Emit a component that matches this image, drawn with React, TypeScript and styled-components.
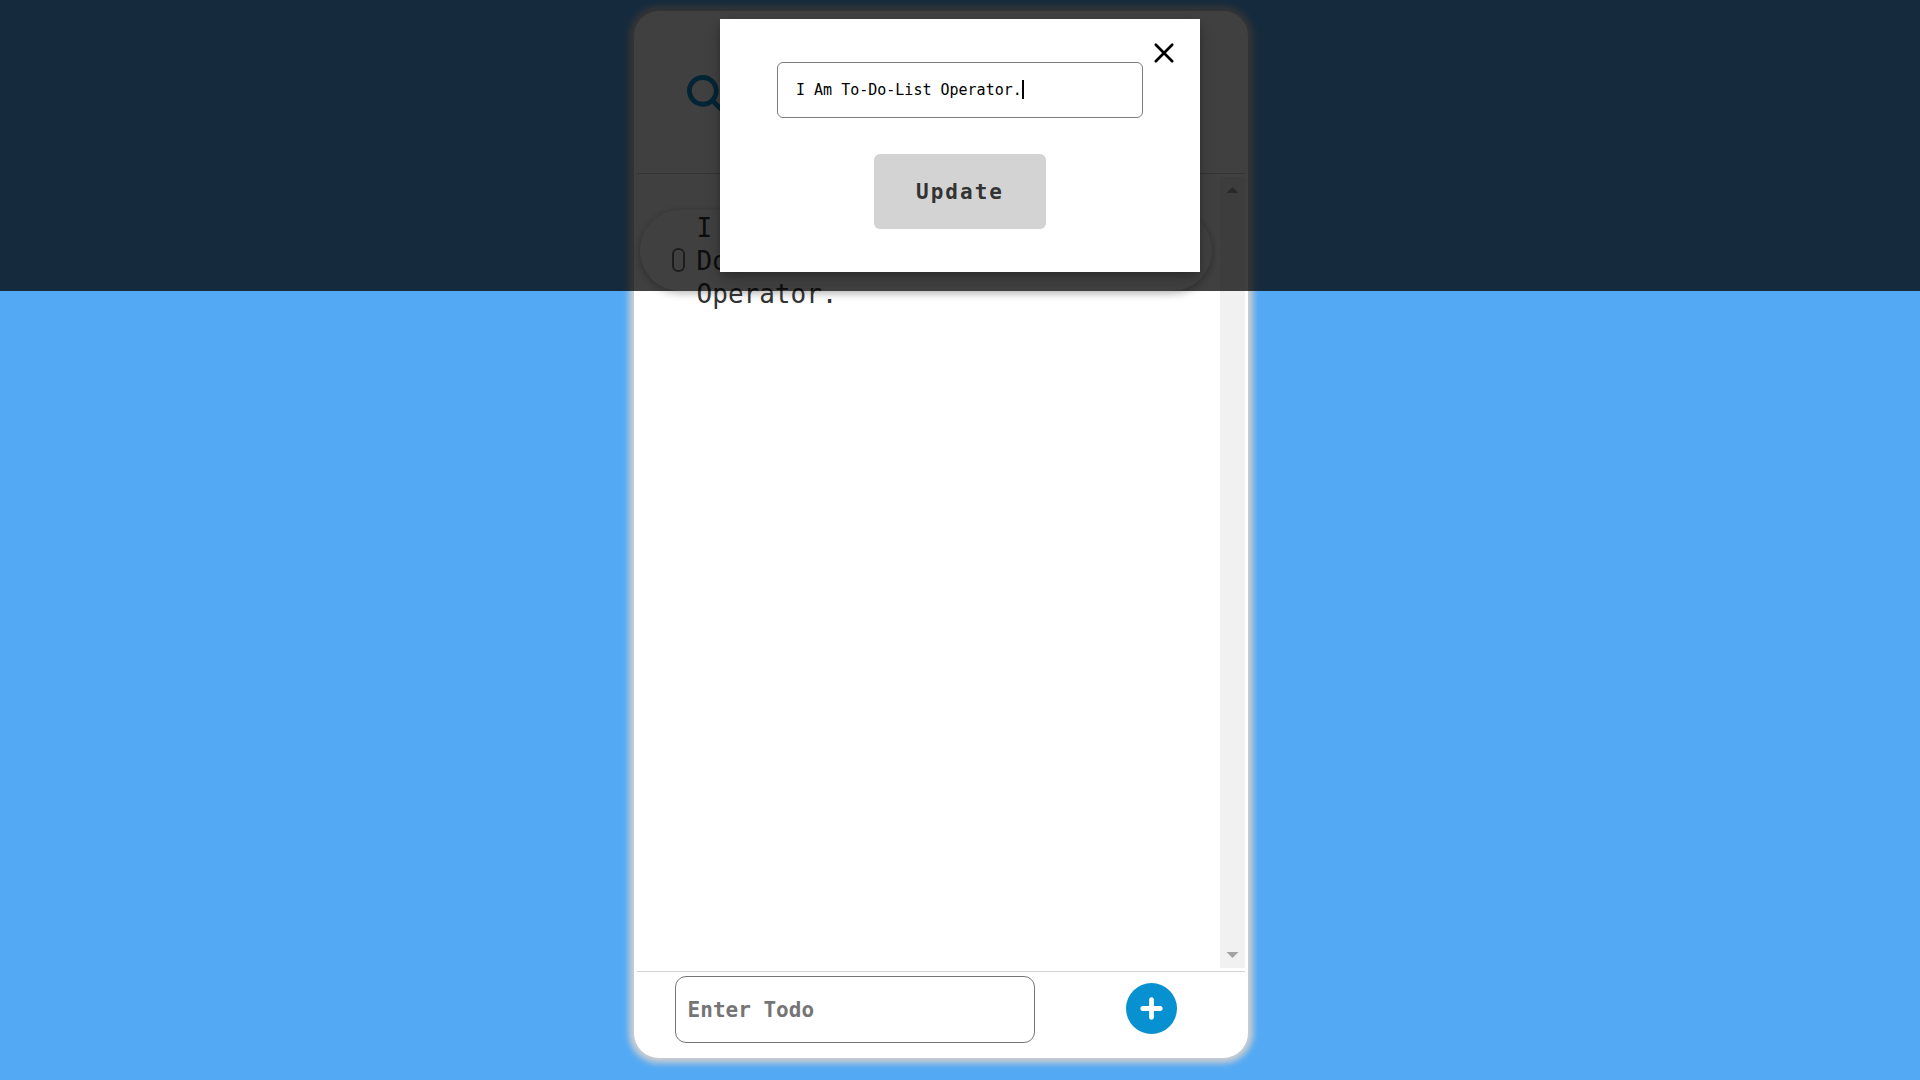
import React from "react";
import styled, { createGlobalStyle } from "styled-components";
import { FaMagnifyingGlass, FaCirclePlus } from "react-icons/fa6";

const mono = 'Consolas, "DejaVu Sans Mono", monospace';

const GlobalStyle = createGlobalStyle`
  *, *::before, *::after { box-sizing: border-box; }
  body { margin: 0; background: #53a9f4; font-family: ${mono}; color: #333; }
  button, input { font-family: inherit; }
`;

const Page = styled.div`
  min-height: 100vh;
  display: flex;
  padding: 11px 0 22px 33%;
`;

const Card = styled.main`
  width: 32vw;
  display: flex;
  flex-direction: column;
  padding: 3px;
  background: #fff;
  border-radius: 25px;
  box-shadow: 0 0 6px 5px #cfcfcf;
`;

const Header = styled.header`
  height: 160px;
  flex: none;
  display: flex;
  align-items: center;
  padding: 2px 50px 0;
  border-bottom: 1px solid lightgray;
`;

const IconButton = styled.button<{ $size: number; $color: string }>`
  display: flex;
  padding: 0;
  border: 0;
  background: none;
  color: ${(p) => p.$color};
  cursor: pointer;
  svg { width: ${(p) => p.$size}px; height: ${(p) => p.$size}px; }
`;

const ListArea = styled.section`
  flex: 1;
  display: flex;
  padding: 3px 0;
`;

const List = styled.ul`
  flex: 1;
  margin: 0;
  padding: 33px 8px 0 3px;
  list-style: none;
`;

const Item = styled.li`
  height: 81px;
  display: flex;
  align-items: center;
  gap: 12px;
  padding: 18px 32px 0;
  border-radius: 41px;
  box-shadow: 0 2px 8px rgba(0, 0, 0, 0.3);
`;

const Check = styled.input`
  appearance: none;
  flex: none;
  width: 13px;
  height: 24px;
  margin: 0;
  border: 2px solid #767676;
  border-radius: 6px;
`;

const ItemText = styled.label`
  width: 160px;
  padding-top: 4px;
  font-size: 26px;
  line-height: 33px;
`;

const Scrollbar = styled.div`
  width: 25px;
  display: flex;
  flex-direction: column;
  justify-content: space-between;
  align-items: center;
  padding: 10px 0;
  background: #f1f1f1;
`;

const Arrow = styled.span<{ $up?: boolean }>`
  width: 12px;
  height: 6px;
  background: #a3a3a3;
  clip-path: ${(p) => (p.$up ? "polygon(50% 0, 100% 100%, 0 100%)" : "polygon(0 0, 100% 0, 50% 100%)")};
`;

const Footer = styled.form`
  height: 84px;
  flex: none;
  display: flex;
  align-items: flex-start;
  justify-content: space-between;
  padding: 4px 68px 0 38px;
  border-top: 1px solid lightgray;
`;

const TodoInput = styled.input`
  width: 360px;
  height: 67px;
  padding: 0 12px;
  border: 1px solid #767676;
  border-radius: 11px;
  font-size: 21px;
  font-weight: 700;
  &::placeholder { color: #757575; }
`;

const AddSlot = styled.div`
  padding-top: 7px;
`;

const Overlay = styled.div`
  position: fixed;
  top: 0;
  left: 0;
  width: 100%;
  padding: 19px 0;
  background: rgba(0, 0, 0, 0.75);
`;

const Dialog = styled.form`
  position: relative;
  width: 25%;
  margin: 0 auto;
  padding: 43px 57px;
  display: flex;
  flex-direction: column;
  align-items: center;
  gap: 36px;
  background: #fff;
  box-shadow: 0 4px 8px rgba(0, 0, 0, 0.2), 0 6px 20px rgba(0, 0, 0, 0.2);
`;

const CloseSlot = styled.div`
  position: absolute;
  top: 22px;
  right: 24px;
`;

const Field = styled.div`
  position: relative;
  width: 100%;
  font-size: 15px;
`;

const EditInput = styled.input`
  display: block;
  width: 100%;
  height: 56px;
  padding: 0 18px;
  border: 1px solid #7b7b82;
  border-radius: 6px;
  font-size: 15px;
  color: #000;
  outline: none;
  caret-color: transparent;
`;

const Caret = styled.span`
  position: absolute;
  top: 18px;
  left: calc(19px + 25ch);
  width: 2px;
  height: 19px;
  background: #000;
`;

const UpdateButton = styled.button`
  width: 172px;
  height: 75px;
  border: 0;
  border-radius: 6px;
  background: lightgray;
  color: #333;
  font-size: 21px;
  font-weight: 700;
  letter-spacing: 2px;
`;

export default function App() {
  return (
    <>
      <GlobalStyle />
      <Page>
        <Card>
          <Header>
            <IconButton type="button" aria-label="Search" $size={39} $color="#0891d1">
              <FaMagnifyingGlass />
            </IconButton>
          </Header>
          <ListArea>
            <List>
              <Item>
                <Check type="checkbox" id="todo-1" />
                <ItemText htmlFor="todo-1">I Am To-Do-List Operator.</ItemText>
              </Item>
            </List>
            <Scrollbar aria-hidden="true">
              <Arrow $up />
              <Arrow />
            </Scrollbar>
          </ListArea>
          <Footer onSubmit={(e) => e.preventDefault()}>
            <TodoInput placeholder="Enter Todo" aria-label="Enter Todo" />
            <AddSlot>
              <IconButton type="submit" aria-label="Add" $size={51} $color="#0891d1">
                <FaCirclePlus />
              </IconButton>
            </AddSlot>
          </Footer>
        </Card>
      </Page>
      <Overlay>
        <Dialog role="dialog" aria-label="Update todo" onSubmit={(e) => e.preventDefault()}>
          <CloseSlot>
            <IconButton type="button" aria-label="Close" $size={24} $color="#000">
              <svg viewBox="0 0 24 24" fill="none" stroke="currentColor" strokeWidth="2.7" strokeLinecap="round">
                <path d="M3.8 3.8L20.2 20.2M20.2 3.8L3.8 20.2" />
              </svg>
            </IconButton>
          </CloseSlot>
          <Field>
            <EditInput aria-label="Todo" defaultValue="I Am To-Do-List Operator." />
            <Caret />
          </Field>
          <UpdateButton type="submit">Update</UpdateButton>
        </Dialog>
      </Overlay>
    </>
  );
}
